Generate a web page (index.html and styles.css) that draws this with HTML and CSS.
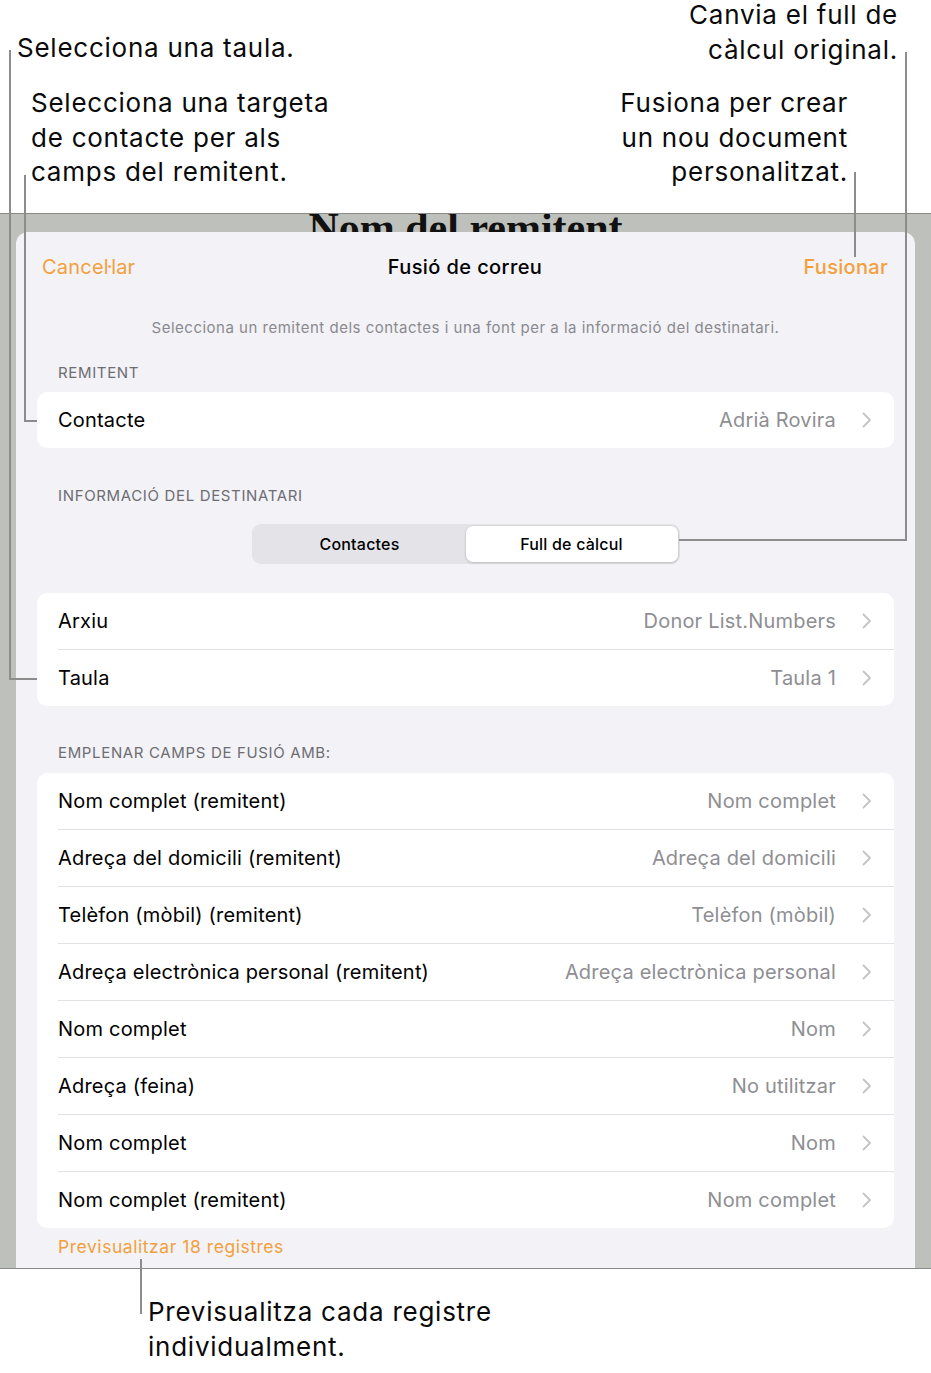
FILE: index.html
```html
<!DOCTYPE html>
<html lang="ca">
<head>
<meta charset="utf-8">
<title>Fusió de correu</title>
<link rel="stylesheet" href="styles.css">
</head>
<body>
<div class="page">
  <header class="callouts">
    <div class="callout-row row-a">
      <p class="callout c-taula">Selecciona una taula.</p>
      <p class="callout right c-full">Canvia el full de<br>càlcul original.</p>
    </div>
    <div class="callout-row row-b">
      <p class="callout c-targeta">Selecciona una targeta<br>de contacte per als<br>camps del remitent.</p>
      <p class="callout right c-fusiona">Fusiona per crear<br>un nou document<br>personalitzat.</p>
    </div>
  </header>

  <section class="screen">
    <div class="doc-title">Nom del remitent</div>
    <div class="sheet">
      <nav class="nav">
        <span class="nav-cancel">Cancel·lar</span>
        <span class="nav-title">Fusió de correu</span>
        <span class="nav-merge">Fusionar</span>
      </nav>
      <p class="subtitle">Selecciona un remitent dels contactes i una font per a la informació del destinatari.</p>

      <h3 class="sec-head h-remitent">REMITENT</h3>
      <div class="card c1">
        <div class="row"><div class="row-inner"><span class="label">Contacte</span><span class="value">Adrià Rovira</span><svg class="chev" viewBox="0 0 10 16"><path d="M1.5 1.5 L8 8 L1.5 14.5"/></svg></div></div>
      </div>

      <h3 class="sec-head h-dest">INFORMACIÓ DEL DESTINATARI</h3>
      <div class="seg-wrap">
        <div class="seg">
          <span class="seg-item">Contactes</span>
          <span class="seg-item selected">Full de càlcul</span>
        </div>
      </div>

      <div class="card c2">
        <div class="row"><div class="row-inner"><span class="label">Arxiu</span><span class="value">Donor List.Numbers</span><svg class="chev" viewBox="0 0 10 16"><path d="M1.5 1.5 L8 8 L1.5 14.5"/></svg></div></div>
        <div class="row"><div class="row-inner"><span class="label">Taula</span><span class="value">Taula 1</span><svg class="chev" viewBox="0 0 10 16"><path d="M1.5 1.5 L8 8 L1.5 14.5"/></svg></div></div>
      </div>

      <h3 class="sec-head h-empl">EMPLENAR CAMPS DE FUSIÓ AMB:</h3>
      <div class="card c3">
        <div class="row"><div class="row-inner"><span class="label">Nom complet (remitent)</span><span class="value">Nom complet</span><svg class="chev" viewBox="0 0 10 16"><path d="M1.5 1.5 L8 8 L1.5 14.5"/></svg></div></div>
        <div class="row"><div class="row-inner"><span class="label">Adreça del domicili (remitent)</span><span class="value">Adreça del domicili</span><svg class="chev" viewBox="0 0 10 16"><path d="M1.5 1.5 L8 8 L1.5 14.5"/></svg></div></div>
        <div class="row"><div class="row-inner"><span class="label">Telèfon (mòbil) (remitent)</span><span class="value">Telèfon (mòbil)</span><svg class="chev" viewBox="0 0 10 16"><path d="M1.5 1.5 L8 8 L1.5 14.5"/></svg></div></div>
        <div class="row"><div class="row-inner"><span class="label">Adreça electrònica personal (remitent)</span><span class="value">Adreça electrònica personal</span><svg class="chev" viewBox="0 0 10 16"><path d="M1.5 1.5 L8 8 L1.5 14.5"/></svg></div></div>
        <div class="row"><div class="row-inner"><span class="label">Nom complet</span><span class="value">Nom</span><svg class="chev" viewBox="0 0 10 16"><path d="M1.5 1.5 L8 8 L1.5 14.5"/></svg></div></div>
        <div class="row"><div class="row-inner"><span class="label">Adreça (feina)</span><span class="value">No utilitzar</span><svg class="chev" viewBox="0 0 10 16"><path d="M1.5 1.5 L8 8 L1.5 14.5"/></svg></div></div>
        <div class="row"><div class="row-inner"><span class="label">Nom complet</span><span class="value">Nom</span><svg class="chev" viewBox="0 0 10 16"><path d="M1.5 1.5 L8 8 L1.5 14.5"/></svg></div></div>
        <div class="row"><div class="row-inner"><span class="label">Nom complet (remitent)</span><span class="value">Nom complet</span><svg class="chev" viewBox="0 0 10 16"><path d="M1.5 1.5 L8 8 L1.5 14.5"/></svg></div></div>
      </div>

      <p class="preview">Previsualitzar 18 registres</p>
    </div>
  </section>

  <p class="callout c-preview">Previsualitza cada registre<br>individualment.</p>

  <svg class="leaders" width="931" height="1373" viewBox="0 0 931 1373">
    <path d="M10 50 V679 H37"/>
    <path d="M25 175 V421 H37"/>
    <path d="M906 52 V540 H679"/>
    <path d="M855 172 V257"/>
    <path d="M141 1259 V1314"/>
  </svg>
</div>
</body>
</html>
```

FILE: styles.css
```css
html, body {
  margin: 0;
  padding: 0;
  background: #ffffff;
}

body {
  font-family: Inter, Roboto, "Noto Sans", "Liberation Sans", sans-serif;
  color: #000;
}

.page {
  position: relative;
  width: 931px;
  height: 1373px;
  overflow: hidden;
}

/* ---------- callouts ---------- */
.callouts {
  height: 213px;
}

.callout-row {
  display: flex;
  justify-content: space-between;
  align-items: flex-start;
}

.callout {
  margin: 0;
  font-size: 26px;
  line-height: 34.5px;
  color: #0a0a0a;
  letter-spacing: 0.75px;
}

.callout.right {
  text-align: right;
}

.c-taula {
  margin-top: 31px;
  margin-left: 17px;
}

.c-full {
  margin-top: -2px;
  margin-right: 33px;
}

.row-b {
  margin-top: 19px;
}

.c-targeta {
  margin-left: 31px;
}

.c-fusiona {
  margin-right: 83px;
}

.c-preview {
  margin-top: 26px;
  margin-left: 148px;
}

/* ---------- screen ---------- */
.screen {
  box-sizing: border-box;
  height: 1056px;
  background: #bec0bb;
  border-top: 1px solid #8a8a8a;
  border-bottom: 1px solid #8a8a8a;
  display: flex;
  flex-direction: column;
  overflow: hidden;
}

.doc-title {
  height: 18px;
  flex: none;
  text-align: center;
  font-family: "Liberation Serif", "DejaVu Serif", serif;
  font-weight: bold;
  font-size: 42px;
  line-height: 28px;
  color: #111;
  white-space: nowrap;
}

.sheet {
  position: relative;
  flex: 1;
  margin: 0 16px;
  background: #f2f2f7;
  border-radius: 12px 12px 0 0;
}

.nav {
  height: 70px;
  display: grid;
  grid-template-columns: 1fr auto 1fr;
  align-items: center;
  padding: 0 27px 0 26px;
  font-size: 20px;
}

.nav-cancel {
  justify-self: start;
  color: #f3a03c;
  letter-spacing: 0.2px;
}

.nav-title {
  font-weight: 500;
  color: #000;
  letter-spacing: 0.4px;
}

.nav-merge {
  justify-self: end;
  color: #f3a03c;
  font-weight: 500;
  letter-spacing: 0.3px;
}

.subtitle {
  margin: 16px 0 0;
  text-align: center;
  font-size: 15px;
  line-height: 20px;
  color: #8a8a8e;
  letter-spacing: 0.5px;
}

.sec-head {
  margin: 0;
  padding-left: 42px;
  font-size: 15px;
  font-weight: 400;
  line-height: 20px;
  color: #6d6d72;
  letter-spacing: 0.65px;
}

.h-remitent { margin-top: 25px; }
.h-dest { margin-top: 38px; }
.h-empl { margin-top: 37px; }

.card {
  margin: 0 21px;
  background: #ffffff;
  border-radius: 10px;
  overflow: hidden;
}

.c1 { margin-top: 9px; }
.c2 { margin-top: 29px; }
.c3 { margin-top: 10px; }

.row {
  padding-left: 21px;
}

.row-inner {
  height: 56px;
  display: flex;
  align-items: center;
  padding-right: 22px;
  font-size: 20px;
  letter-spacing: 0.2px;
}

.row + .row .row-inner {
  border-top: 1px solid #e1e1e6;
}

.label {
  flex: 1;
  color: #000;
  white-space: nowrap;
}

.value {
  color: #8e8e93;
  white-space: nowrap;
}

.chev {
  width: 10px;
  height: 16px;
  margin-left: 26px;
  flex: none;
}

.chev path {
  fill: none;
  stroke: #c4c4c8;
  stroke-width: 1.8;
  stroke-linecap: round;
  stroke-linejoin: round;
}

/* segmented control */
.seg-wrap {
  margin-top: 18px;
  display: flex;
  justify-content: center;
}

.seg {
  box-sizing: border-box;
  width: 428px;
  height: 40px;
  padding: 2px;
  background: #e3e3e8;
  border-radius: 9px;
  display: grid;
  grid-template-columns: 1fr 1fr;
}

.seg-item {
  display: flex;
  align-items: center;
  justify-content: center;
  font-size: 16px;
  font-weight: 500;
  color: #000;
  border-radius: 7px;
  letter-spacing: 0.2px;
}

.seg-item.selected {
  background: #ffffff;
  box-shadow: 0 1px 3px rgba(0, 0, 0, 0.16), 0 0 0 0.5px rgba(0, 0, 0, 0.05);
}

.preview {
  margin: 9px 0 0;
  padding-left: 42px;
  font-size: 17.5px;
  line-height: 20px;
  color: #f3a03c;
  letter-spacing: 0.55px;
}

/* leader lines overlay */
.leaders {
  position: absolute;
  top: 0;
  left: 0;
  pointer-events: none;
}

.leaders path {
  fill: none;
  stroke: #8c8c8c;
  stroke-width: 2;
}
```
